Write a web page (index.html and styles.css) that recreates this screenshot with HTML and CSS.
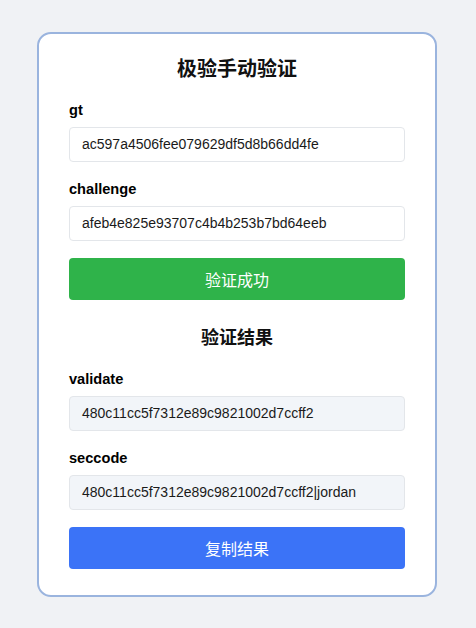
FILE: index.html
```html
<!DOCTYPE html>
<html lang="zh">
<head>
<meta charset="utf-8">
<title>极验手动验证</title>
<link rel="stylesheet" href="styles.css">
</head>
<body>
<div class="card">
  <h1 class="title">极验手动验证</h1>
  <div class="field">
    <label class="label">gt</label>
    <div class="input">ac597a4506fee079629df5d8b66dd4fe</div>
  </div>
  <div class="field">
    <label class="label">challenge</label>
    <div class="input">afeb4e825e93707c4b4b253b7bd64eeb</div>
  </div>
  <button class="btn btn-green">验证成功</button>
  <h2 class="subtitle">验证结果</h2>
  <div class="field">
    <label class="label">validate</label>
    <div class="input readonly">480c11cc5f7312e89c9821002d7ccff2</div>
  </div>
  <div class="field">
    <label class="label">seccode</label>
    <div class="input readonly">480c11cc5f7312e89c9821002d7ccff2|jordan</div>
  </div>
  <button class="btn btn-blue">复制结果</button>
</div>
</body>
</html>
```
FILE: styles.css
```css
* { box-sizing: border-box; }
html, body { margin: 0; padding: 0; }
body {
  background: #f0f2f5;
  font-family: "Liberation Sans", Arial, "Noto Sans CJK SC", sans-serif;
  color: #111;
  padding: 32px 2px 0 0;
}
.card {
  width: 400px;
  margin: 0 auto;
  background: #fff;
  border: 2px solid #9ab4de;
  border-radius: 14px;
  padding: 20px 30px 26px;
  display: flex;
  flex-direction: column;
}
.title {
  margin: 0 0 18px;
  text-align: center;
  font-family: "Noto Sans CJK SC", sans-serif;
  font-size: 20px;
  line-height: 28px;
  font-weight: 700;
  color: #111;
}
.subtitle {
  margin: 23px 0 20px;
  text-align: center;
  font-family: "Noto Sans CJK SC", sans-serif;
  font-size: 18px;
  line-height: 26px;
  font-weight: 700;
  color: #111;
}
.field {
  display: flex;
  flex-direction: column;
  margin-bottom: 17px;
}
.label {
  font-size: 14.6px;
  font-weight: 700;
  line-height: 20px;
  margin-bottom: 7px;
  color: #000;
}
.input {
  height: 35px;
  border: 1px solid #e3e6ea;
  border-radius: 4px;
  padding: 0 12px;
  font-size: 14px;
  line-height: 33px;
  color: #1a1a1a;
  background: #fff;
  white-space: nowrap;
}
.input.readonly {
  background: #f2f5f9;
}
.btn {
  height: 42px;
  border: none;
  border-radius: 4px;
  color: #fff;
  font-family: "Noto Sans CJK SC", sans-serif;
  font-size: 16px;
  width: 100%;
  padding: 0;
  margin: 0;
}
.btn-green { background: #2fb34a; }
.btn-blue { background: #3b73f7; }
```
